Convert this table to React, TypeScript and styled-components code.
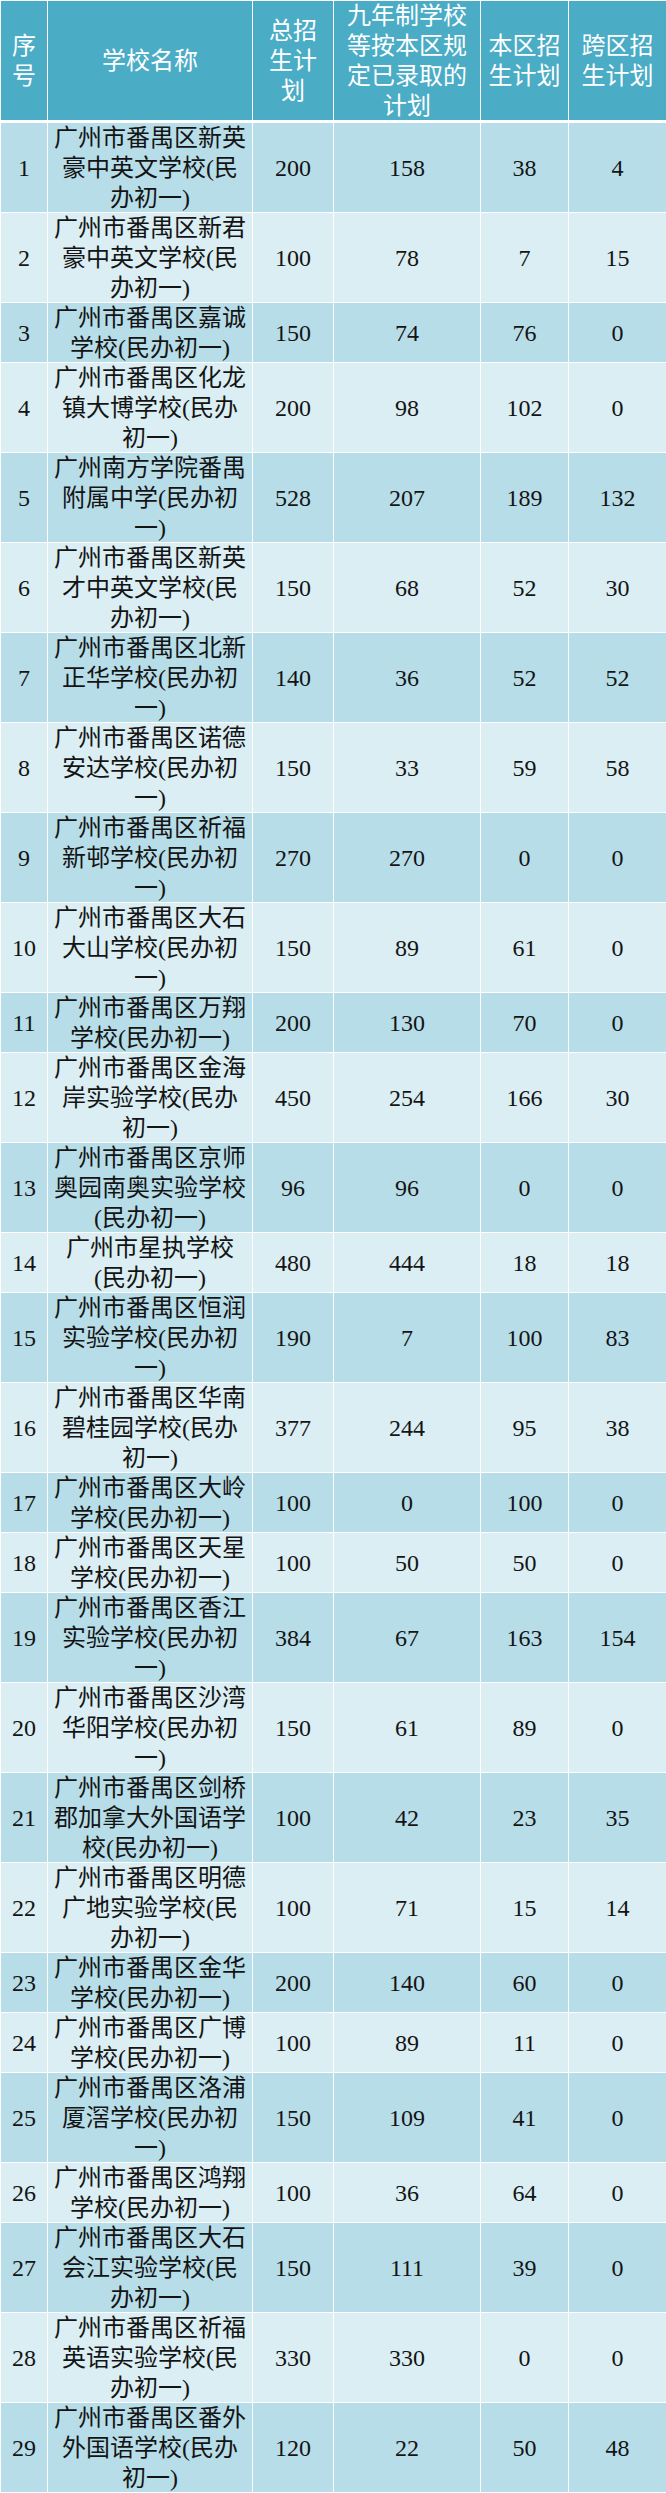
import React from 'react';
import styled, {createGlobalStyle} from 'styled-components';

const headerColor = '#4bacc6';
const oddColor = '#b7dde8';
const evenColor = '#daeef3';
const textColor = '#141414';

const GlobalStyle = createGlobalStyle`
    html, body {
        margin: 0;
        padding: 0;
        background: #ffffff;
    }
    body {
        font-family: 'Liberation Serif', 'Noto Sans CJK SC', serif;
    }
`;

interface School {
    no: number;
    name: string[];
    total: number;
    admitted: number;
    local: number;
    cross: number;
}

const schools: School[] = [
    {no: 1, name: ['广州市番禺区新英', '豪中英文学校(民', '办初一)'], total: 200, admitted: 158, local: 38, cross: 4},
    {no: 2, name: ['广州市番禺区新君', '豪中英文学校(民', '办初一)'], total: 100, admitted: 78, local: 7, cross: 15},
    {no: 3, name: ['广州市番禺区嘉诚', '学校(民办初一)'], total: 150, admitted: 74, local: 76, cross: 0},
    {no: 4, name: ['广州市番禺区化龙', '镇大博学校(民办', '初一)'], total: 200, admitted: 98, local: 102, cross: 0},
    {no: 5, name: ['广州南方学院番禺', '附属中学(民办初', '一)'], total: 528, admitted: 207, local: 189, cross: 132},
    {no: 6, name: ['广州市番禺区新英', '才中英文学校(民', '办初一)'], total: 150, admitted: 68, local: 52, cross: 30},
    {no: 7, name: ['广州市番禺区北新', '正华学校(民办初', '一)'], total: 140, admitted: 36, local: 52, cross: 52},
    {no: 8, name: ['广州市番禺区诺德', '安达学校(民办初', '一)'], total: 150, admitted: 33, local: 59, cross: 58},
    {no: 9, name: ['广州市番禺区祈福', '新邨学校(民办初', '一)'], total: 270, admitted: 270, local: 0, cross: 0},
    {no: 10, name: ['广州市番禺区大石', '大山学校(民办初', '一)'], total: 150, admitted: 89, local: 61, cross: 0},
    {no: 11, name: ['广州市番禺区万翔', '学校(民办初一)'], total: 200, admitted: 130, local: 70, cross: 0},
    {no: 12, name: ['广州市番禺区金海', '岸实验学校(民办', '初一)'], total: 450, admitted: 254, local: 166, cross: 30},
    {no: 13, name: ['广州市番禺区京师', '奥园南奥实验学校', '(民办初一)'], total: 96, admitted: 96, local: 0, cross: 0},
    {no: 14, name: ['广州市星执学校', '(民办初一)'], total: 480, admitted: 444, local: 18, cross: 18},
    {no: 15, name: ['广州市番禺区恒润', '实验学校(民办初', '一)'], total: 190, admitted: 7, local: 100, cross: 83},
    {no: 16, name: ['广州市番禺区华南', '碧桂园学校(民办', '初一)'], total: 377, admitted: 244, local: 95, cross: 38},
    {no: 17, name: ['广州市番禺区大岭', '学校(民办初一)'], total: 100, admitted: 0, local: 100, cross: 0},
    {no: 18, name: ['广州市番禺区天星', '学校(民办初一)'], total: 100, admitted: 50, local: 50, cross: 0},
    {no: 19, name: ['广州市番禺区香江', '实验学校(民办初', '一)'], total: 384, admitted: 67, local: 163, cross: 154},
    {no: 20, name: ['广州市番禺区沙湾', '华阳学校(民办初', '一)'], total: 150, admitted: 61, local: 89, cross: 0},
    {no: 21, name: ['广州市番禺区剑桥', '郡加拿大外国语学', '校(民办初一)'], total: 100, admitted: 42, local: 23, cross: 35},
    {no: 22, name: ['广州市番禺区明德', '广地实验学校(民', '办初一)'], total: 100, admitted: 71, local: 15, cross: 14},
    {no: 23, name: ['广州市番禺区金华', '学校(民办初一)'], total: 200, admitted: 140, local: 60, cross: 0},
    {no: 24, name: ['广州市番禺区广博', '学校(民办初一)'], total: 100, admitted: 89, local: 11, cross: 0},
    {no: 25, name: ['广州市番禺区洛浦', '厦滘学校(民办初', '一)'], total: 150, admitted: 109, local: 41, cross: 0},
    {no: 26, name: ['广州市番禺区鸿翔', '学校(民办初一)'], total: 100, admitted: 36, local: 64, cross: 0},
    {no: 27, name: ['广州市番禺区大石', '会江实验学校(民', '办初一)'], total: 150, admitted: 111, local: 39, cross: 0},
    {no: 28, name: ['广州市番禺区祈福', '英语实验学校(民', '办初一)'], total: 330, admitted: 330, local: 0, cross: 0},
    {no: 29, name: ['广州市番禺区番外', '外国语学校(民办', '初一)'], total: 120, admitted: 22, local: 50, cross: 48}
];

const headers: string[][] = [
    ['序', '号'],
    ['学校名称'],
    ['总招', '生计', '划'],
    ['九年制学校', '等按本区规', '定已录取的', '计划'],
    ['本区招', '生计划'],
    ['跨区招', '生计划']
];

const Sheet = styled.div`
    width: 666px;
    box-sizing: border-box;
    padding: 1px 0 0 1px;
    background: #ffffff;
    display: flex;
    flex-direction: column;
    gap: 1px;
`;

const Row = styled.div<{$height: number; $bg: string; $head?: boolean}>`
    display: grid;
    grid-template-columns: 46px 204px 80px 146px 87px 97px;
    column-gap: 1px;
    height: ${props => props.$height}px;
    margin-bottom: ${props => (props.$head ? 2 : 0)}px;

    > div {
        background: ${props => props.$bg};
    }
`;

const Cell = styled.div<{$head?: boolean}>`
    display: flex;
    flex-direction: column;
    justify-content: center;
    align-items: center;
    font-size: 24px;
    line-height: 30px;
    color: ${props => (props.$head ? '#ffffff' : textColor)};
    text-align: center;
    white-space: nowrap;
    overflow: hidden;
`;

const Line = styled.span`
    display: block;
`;

const Lines: React.FC<{lines: string[]}> = ({lines}) => (
    <>
        {lines.map((l, i) => (
            <Line key={i}>{l}</Line>
        ))}
    </>
);

export default function App() {
    return (
        <>
            <GlobalStyle />
            <Sheet>
                <Row $height={119} $bg={headerColor} $head>
                    {headers.map((h, i) => (
                        <Cell $head key={i}>
                            <Lines lines={h} />
                        </Cell>
                    ))}
                </Row>
                {schools.map(s => (
                    <Row
                        key={s.no}
                        $height={s.name.length * 30 - 1}
                        $bg={s.no % 2 === 1 ? oddColor : evenColor}
                    >
                        <Cell>{s.no}</Cell>
                        <Cell>
                            <Lines lines={s.name} />
                        </Cell>
                        <Cell>{s.total}</Cell>
                        <Cell>{s.admitted}</Cell>
                        <Cell>{s.local}</Cell>
                        <Cell>{s.cross}</Cell>
                    </Row>
                ))}
            </Sheet>
        </>
    );
}
